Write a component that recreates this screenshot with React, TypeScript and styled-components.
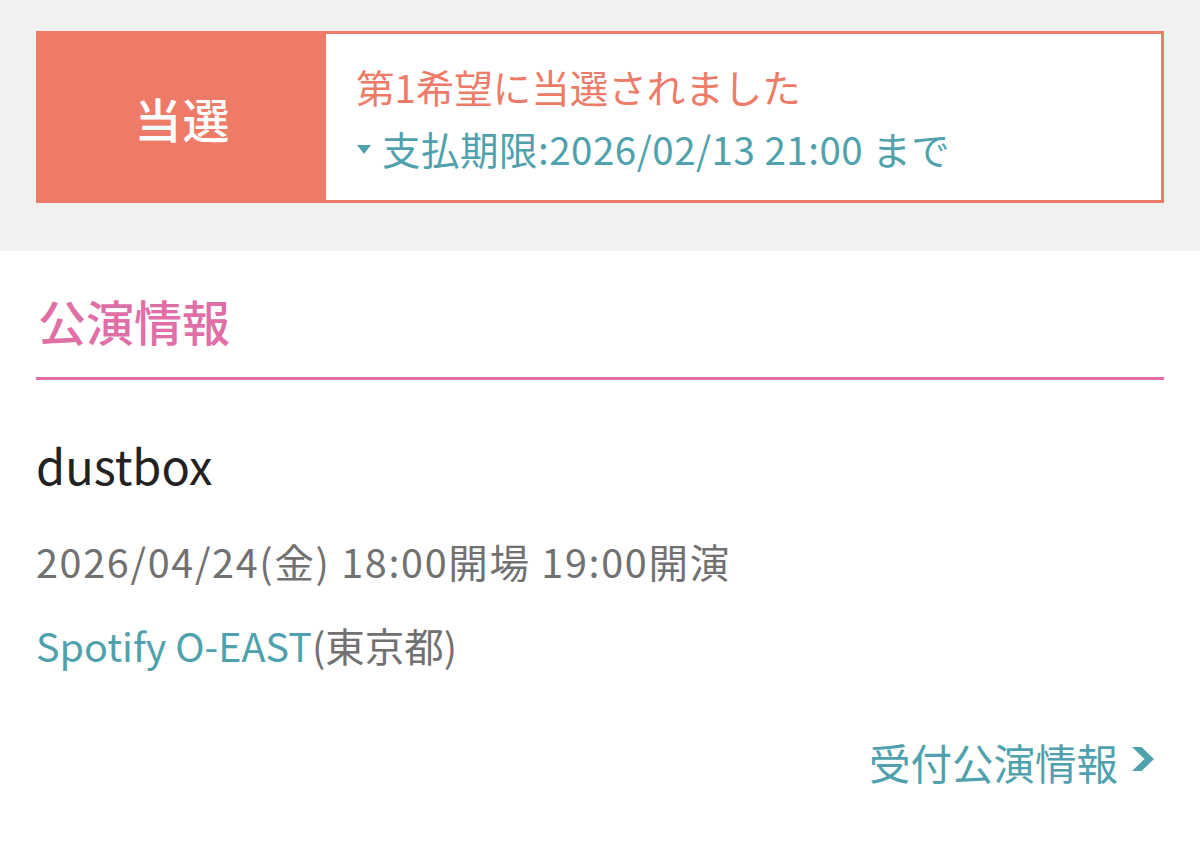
import React from 'react'
import styled, { createGlobalStyle } from 'styled-components'

const GlobalStyle = createGlobalStyle`
  body {
    margin: 0;
    background: #ffffff;
    font-family: "Noto Sans CJK JP", "Noto Sans", sans-serif;
  }
`

const salmon = '#ee7b68'
const teal = '#4fa2ad'
const pink = '#e06fa8'

const TopSection = styled.section`
  background: #f1f1f1;
  padding: 31px 36px 48px;
`

const ResultCard = styled.div`
  display: flex;
  height: 172px;
  box-sizing: border-box;
  border: 3px solid ${salmon};
  background: #ffffff;
`

const Badge = styled.div`
  width: 287px;
  flex-shrink: 0;
  display: flex;
  align-items: center;
  justify-content: center;
  background: ${salmon};
  color: #ffffff;
  font-size: 47px;
  font-weight: 500;
  letter-spacing: 1px;
`

const ResultBody = styled.div`
  display: flex;
  flex-direction: column;
  justify-content: center;
  gap: 8px;
  padding-left: 30px;
`

const ResultTitle = styled.div`
  color: ${salmon};
  font-size: 38.5px;
  line-height: 54px;
`

const Deadline = styled.div`
  display: flex;
  align-items: center;
  gap: 11px;
  color: ${teal};
  font-size: 38.5px;
  letter-spacing: 0.5px;
  line-height: 54px;
`

const Caret = styled.span`
  width: 0;
  height: 0;
  border-left: 7.5px solid transparent;
  border-right: 7.5px solid transparent;
  border-top: 9px solid ${teal};
  margin-left: 1px;
  margin-top: 2px;
`

const InfoSection = styled.section`
  padding: 0 36px;
`

const SectionHeading = styled.h2`
  margin: 0;
  padding: 36px 2px 24px;
  color: ${pink};
  font-size: 48px;
  font-weight: 500;
  line-height: 66px;
  border-bottom: 3px solid ${pink};
`

const EventName = styled.div`
  margin-top: 57px;
  color: #222222;
  font-size: 47px;
  line-height: 56px;
`

const EventDate = styled.div`
  margin-top: 41px;
  color: #717171;
  font-size: 39.5px;
  letter-spacing: 1.7px;
  line-height: 54px;
`

const Venue = styled.div`
  margin-top: 30px;
  color: #717171;
  font-size: 39.5px;
  line-height: 54px;
`

const VenueName = styled.span`
  color: ${teal};
`

const LinkRow = styled.div`
  display: flex;
  justify-content: flex-end;
  margin-top: 62px;
  padding-right: 10px;
`

const DetailLink = styled.a`
  display: flex;
  align-items: center;
  gap: 14px;
  color: ${teal};
  font-size: 41.5px;
  line-height: 56px;
  text-decoration: none;
  cursor: pointer;

  svg {
    margin-bottom: 6px;
  }
`

const Chevron = () => (
  <svg width="22" height="24" viewBox="0 0 22 24">
    <polygon points="0,0 9.5,0 22,12 9.5,24 0,24 12.5,12" fill={teal} />
  </svg>
)

export default function App() {
  return (
    <>
      <GlobalStyle />
      <TopSection>
        <ResultCard>
          <Badge>当選</Badge>
          <ResultBody>
            <ResultTitle>第1希望に当選されました</ResultTitle>
            <Deadline>
              <Caret />
              支払期限:2026/02/13 21:00 まで
            </Deadline>
          </ResultBody>
        </ResultCard>
      </TopSection>
      <InfoSection>
        <SectionHeading>公演情報</SectionHeading>
        <EventName>dustbox</EventName>
        <EventDate>2026/04/24(金) 18:00開場 19:00開演</EventDate>
        <Venue>
          <VenueName>Spotify O-EAST</VenueName>(東京都)
        </Venue>
        <LinkRow>
          <DetailLink>
            受付公演情報
            <Chevron />
          </DetailLink>
        </LinkRow>
      </InfoSection>
    </>
  )
}
